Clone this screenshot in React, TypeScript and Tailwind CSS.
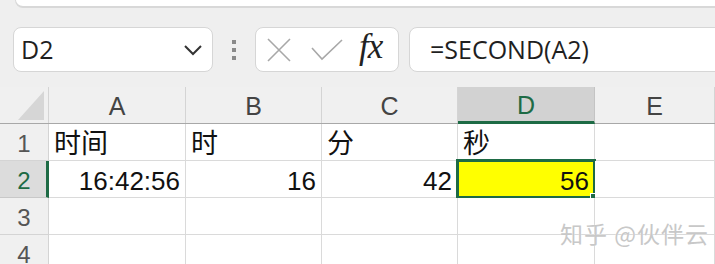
import React from "react";

const cellFont = { fontFamily: '"Liberation Sans", "Noto Sans CJK SC", sans-serif' };

export default function App() {
  const cols = [
    { k: "A", w: "w-[137px]" },
    { k: "B", w: "w-[136px]" },
    { k: "C", w: "w-[136px]" },
    { k: "D", w: "w-[137px]" },
    { k: "E", w: "flex-1" },
  ];
  const data: Record<number, string[]> = {
    1: ["时间", "时", "分", "秒", ""],
    2: ["16:42:56", "16", "42", "56", ""],
    3: ["", "", "", "", ""],
    4: ["", "", "", "", ""],
  };
  return (
    <div
      className="relative w-[715px] h-[264px] bg-[#efefef] overflow-hidden flex flex-col"
      style={{ fontFamily: '"Open Sans", "Noto Sans CJK SC", sans-serif' }}
    >
      {/* top strip */}
      <div className="h-[8px] ml-[15px] -mr-[20px] bg-white rounded-b-[10px] border-b-2 border-x border-[#d8d8d8] shrink-0" />

      {/* formula bar */}
      <div className="flex items-stretch h-[45px] mt-[19px] ml-[13px] -mr-[20px] shrink-0">
        <div className="w-[200px] bg-white border border-[#d6d6d6] rounded-[8px] flex items-center justify-between pl-[7px] pr-[9px]">
          <span className="text-[25px] leading-none text-[#1f1f1f]">D2</span>
          <svg width="20" height="12" viewBox="0 0 20 12">
            <path d="M2 2 L10 10 L18 2" fill="none" stroke="#333" strokeWidth="2" />
          </svg>
        </div>
        <div className="w-[42px] flex flex-col items-center justify-center gap-[4px]">
          <div className="w-[4px] h-[4px] bg-[#8a8a8a]" />
          <div className="w-[4px] h-[4px] bg-[#8a8a8a]" />
          <div className="w-[4px] h-[4px] bg-[#8a8a8a]" />
        </div>
        <div className="w-[144px] bg-white border border-[#d6d6d6] rounded-[8px] flex items-center pl-[11px]">
          <svg width="24" height="24" viewBox="0 0 24 24">
            <path d="M1 1 L23 23 M23 1 L1 23" fill="none" stroke="#a8a8a8" strokeWidth="1.6" />
          </svg>
          <svg width="32" height="22" viewBox="0 0 32 22" className="ml-[20px]">
            <path d="M1 9 L11 20 L31 1" fill="none" stroke="#a8a8a8" strokeWidth="1.6" />
          </svg>
          <span
            className="ml-[16px] text-[35px] leading-none italic text-[#222] -mt-[6px] tracking-[-1px]"
            style={{ fontFamily: '"Liberation Serif", serif' }}
          >
            fx
          </span>
        </div>
        <div className="flex-1 ml-[10px] bg-white border border-[#d6d6d6] rounded-[8px] flex items-center pl-[20px]">
          <span className="text-[25px] leading-none text-[#1f1f1f]">=SECOND(A2)</span>
        </div>
      </div>

      {/* grid */}
      <div className="mt-[15px] flex flex-col" style={cellFont}>
        {/* column headers */}
        <div className="flex h-[37px] bg-[#f0f0f0] border-b border-[#a8a8a8]">
          <div className="w-[49px] border-r border-[#d4d4d4] flex items-end justify-end pr-[4px] pb-[3px]">
            <svg width="26" height="29" viewBox="0 0 26 29">
              <path d="M0 29 L26 29 L26 0 Z" fill="#d6d6d6" />
            </svg>
          </div>
          {cols.map((c) =>
            c.k === "D" ? (
              <div
                key={c.k}
                className={`${c.w} bg-[#d2d2d2] border-r border-[#c4c4c4] border-b-[3px] border-b-[#1e6b45] -mb-[1px] flex items-center justify-center pt-[4px] text-[25px] text-[#1e6b45]`}
              >
                {c.k}
              </div>
            ) : (
              <div
                key={c.k}
                className={`${c.w} border-r border-[#d4d4d4] flex items-center justify-center pt-[4px] text-[25px] text-[#444]`}
              >
                {c.k}
              </div>
            )
          )}
        </div>
        {/* rows */}
        {[1, 2, 3, 4].map((r) => (
          <div key={r} className="flex h-[37px] shrink-0">
            {r === 2 ? (
              <div className="w-[49px] bg-[#dcdcdc] border-b border-[#c8c8c8] border-r-[3px] border-r-[#1e6b45] flex items-center justify-center pt-[4px] text-[24px] text-[#1e6b45] pl-[2px]">
                {r}
              </div>
            ) : (
              <div className="w-[49px] bg-[#f0f0f0] border-b border-r border-[#d4d4d4] flex items-center justify-center pt-[4px] text-[24px] text-[#555]">
                {r}
              </div>
            )}
            {cols.map((c, i) => {
              const v = data[r][i];
              const isNum = r === 2;
              const isSel = r === 2 && c.k === "D";
              return (
                <div
                  key={c.k}
                  className={`${c.w} relative border-b border-r border-[#dadada] flex items-center pt-[4px] ${
                    r === 1 ? "text-[27px]" : "text-[26px]"
                  } text-[#111] ${isNum ? "justify-end pr-[5px]" : "justify-start pl-[5px]"} ${
                    isSel ? "bg-[#ffff00]" : "bg-white"
                  }`}
                >
                  {isSel && (
                    <div className="absolute -left-[2px] -top-[2px] -right-[2px] -bottom-[2px] border-[3px] border-[#1e6b45]">
                      <div className="absolute -right-[5px] -bottom-[5px] w-[8px] h-[8px] bg-[#1e6b45] border border-white" />
                    </div>
                  )}
                  <span className="relative leading-none">{v}</span>
                </div>
              );
            })}
          </div>
        ))}
      </div>

      {/* watermark */}
      <div
        className="absolute left-[560px] top-[216px] text-[23px] text-[#c8c8c8] tracking-[1px]"
        style={{ fontFamily: '"Noto Sans CJK SC", sans-serif', textShadow: "0 0 1px #fff" }}
      >
        知乎 @伙伴云
      </div>
    </div>
  );
}
